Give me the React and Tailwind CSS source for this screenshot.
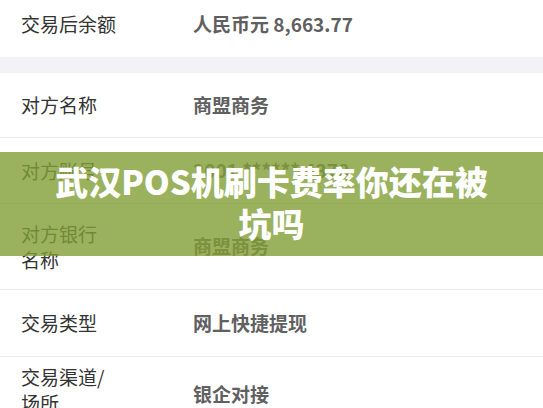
const rows = [
	{ label: "对方名称", value: "商盟商务", h: "h-[65px]" },
	{ label: "对方账号", value: "2001 ****** 4378", h: "h-[66px]" },
	{ label: ["对方银行", "名称"], value: "商盟商务", h: "h-[86px]" },
	{ label: "交易类型", value: "网上快捷提现", h: "h-[67px]" },
];

function Row({ label, value, h }) {
	return (
		<div className={`flex items-center pl-[21px] ${h} border-b border-[#ebebeb]`}>
			<div className="w-[172px] shrink-0 text-[19px] leading-[26px] text-[#333333]">
				{Array.isArray(label) ? label.map((l) => <div key={l}>{l}</div>) : label}
			</div>
			<div className="text-[19px] font-semibold text-[#606060]">{value}</div>
		</div>
	);
}

function App() {
	return (
		<div
			className="relative w-[543px] h-[408px] overflow-hidden bg-white"
			style={{ fontFamily: '"Noto Sans CJK SC", "Noto Sans", sans-serif' }}
		>
			<div className="flex items-center h-[57px] pb-[9px] pl-[21px]">
				<div className="w-[172px] shrink-0 text-[19px] text-[#333333]">交易后余额</div>
				<div className="text-[19px] font-semibold text-[#606060]">人民币元 8,663.77</div>
			</div>
			<div className="h-[16px] bg-[#f3f2f5]" />

			{rows.map((r) => (
				<Row key={r.h + r.value} {...r} />
			))}

			<div className="flex items-start pl-[21px] pt-[7px] h-[60px]">
				<div className="w-[172px] shrink-0 text-[19px] leading-[26px] text-[#333333]">
					<div>交易渠道/</div>
					<div>场所</div>
				</div>
				<div className="mt-[16px] text-[19px] font-semibold text-[#606060]">银企对接</div>
			</div>

			{/* title banner over the list */}
			<div className="absolute left-0 right-0 top-[152px] h-[104px] flex items-center justify-center bg-[rgba(129,158,54,0.8)] px-[40px]">
				<h1 className="text-center text-[33px] leading-[42px] font-black text-white -mt-[4px]">
					武汉POS机刷卡费率你还在被坑吗
				</h1>
			</div>
		</div>
	);
}

export default App;
